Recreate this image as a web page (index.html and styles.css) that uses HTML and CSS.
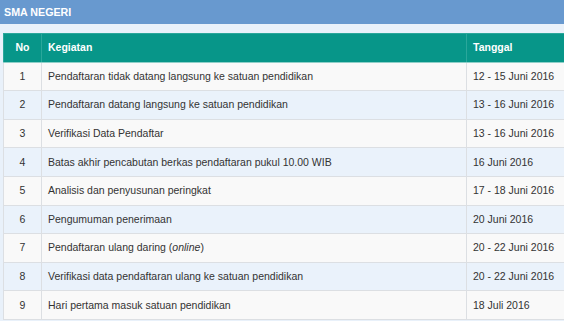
FILE: index.html
```html
<!DOCTYPE html>
<html>
<head>
<meta charset="utf-8">
<link rel="stylesheet" href="styles.css">
</head>
<body>
<div class="panel">
  <div class="panel-title">SMA NEGERI</div>
  <div class="panel-body">
    <table class="jadwal">
      <thead>
        <tr><th class="no">No</th><th class="keg">Kegiatan</th><th class="tgl">Tanggal</th></tr>
      </thead>
      <tbody>
        <tr><td class="no">1</td><td>Pendaftaran tidak datang langsung ke satuan pendidikan</td><td>12 - 15 Juni 2016</td></tr>
        <tr><td class="no">2</td><td>Pendaftaran datang langsung ke satuan pendidikan</td><td>13 - 16 Juni 2016</td></tr>
        <tr><td class="no">3</td><td>Verifikasi Data Pendaftar</td><td>13 - 16 Juni 2016</td></tr>
        <tr><td class="no">4</td><td>Batas akhir pencabutan berkas pendaftaran pukul 10.00 WIB</td><td>16 Juni 2016</td></tr>
        <tr><td class="no">5</td><td>Analisis dan penyusunan peringkat</td><td>17 - 18 Juni 2016</td></tr>
        <tr><td class="no">6</td><td>Pengumuman penerimaan</td><td>20 Juni 2016</td></tr>
        <tr><td class="no">7</td><td>Pendaftaran ulang daring (<em>online</em>)</td><td>20 - 22 Juni 2016</td></tr>
        <tr><td class="no">8</td><td>Verifikasi data pendaftaran ulang ke satuan pendidikan</td><td>20 - 22 Juni 2016</td></tr>
        <tr><td class="no">9</td><td>Hari pertama masuk satuan pendidikan</td><td>18 Juli 2016</td></tr>
      </tbody>
    </table>
  </div>
</div>
</body>
</html>
```

FILE: styles.css
```css
html, body {
  margin: 0;
  padding: 0;
  background: #e9f1fa;
  overflow: hidden;
}
body {
  font-family: "Liberation Sans", Arial, sans-serif;
  font-size: 10.5px;
  color: #333333;
}
.panel {
  width: 564px;
  overflow: hidden;
}
.panel-title {
  height: 24px;
  line-height: 24px;
  background: #6899cf;
  color: #ffffff;
  font-weight: bold;
  font-size: 10.7px;
  padding-left: 4px;
  box-sizing: border-box;
}
.panel-body {
  padding: 9px 0 0 3px;
}
.jadwal {
  border-collapse: collapse;
  width: 580px;
  table-layout: fixed;
}
.jadwal th, .jadwal td {
  border: 1px solid #dcdfe3;
  padding: 6.3px 6px;
  line-height: 15px;
  text-align: left;
  vertical-align: middle;
  white-space: nowrap;
}
.jadwal th {
  background: #079689;
  color: #ffffff;
  font-weight: bold;
  border-color: #2aa79b;
  border-bottom-color: #8fcfc8;
}
.jadwal .no {
  width: 37px;
  padding-left: 0;
  padding-right: 0;
  text-align: center;
}
.jadwal .keg {
  width: 412px;
}
.jadwal tbody tr:nth-child(odd) td {
  background: #f9f9f9;
}
.jadwal tbody tr:nth-child(even) td {
  background: #eaf2fb;
}
```
